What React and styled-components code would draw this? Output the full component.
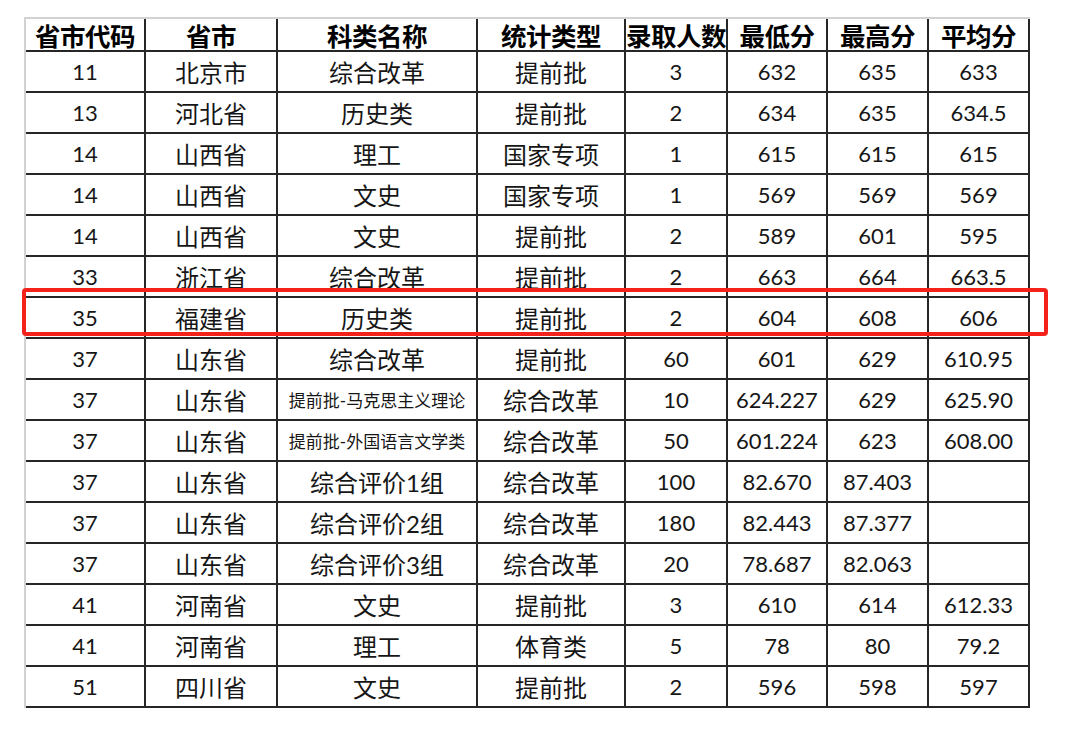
import styled, { createGlobalStyle } from "styled-components";

const columns = ["省市代码", "省市", "科类名称", "统计类型", "录取人数", "最低分", "最高分", "平均分"];

const rows = [
    ["11", "北京市", "综合改革", "提前批", "3", "632", "635", "633"],
    ["13", "河北省", "历史类", "提前批", "2", "634", "635", "634.5"],
    ["14", "山西省", "理工", "国家专项", "1", "615", "615", "615"],
    ["14", "山西省", "文史", "国家专项", "1", "569", "569", "569"],
    ["14", "山西省", "文史", "提前批", "2", "589", "601", "595"],
    ["33", "浙江省", "综合改革", "提前批", "2", "663", "664", "663.5"],
    ["35", "福建省", "历史类", "提前批", "2", "604", "608", "606"],
    ["37", "山东省", "综合改革", "提前批", "60", "601", "629", "610.95"],
    ["37", "山东省", "提前批-马克思主义理论", "综合改革", "10", "624.227", "629", "625.90"],
    ["37", "山东省", "提前批-外国语言文学类", "综合改革", "50", "601.224", "623", "608.00"],
    ["37", "山东省", "综合评价1组", "综合改革", "100", "82.670", "87.403", ""],
    ["37", "山东省", "综合评价2组", "综合改革", "180", "82.443", "87.377", ""],
    ["37", "山东省", "综合评价3组", "综合改革", "20", "78.687", "82.063", ""],
    ["41", "河南省", "文史", "提前批", "3", "610", "614", "612.33"],
    ["41", "河南省", "理工", "体育类", "5", "78", "80", "79.2"],
    ["51", "四川省", "文史", "提前批", "2", "596", "598", "597"],
];

const HIGHLIGHT_ROW = 6;

function sizeOf(value) {
    if (value.length > 8) return "small";
    if (/^[\d.]*$/.test(value)) return "number";
    return "text";
}

export default function App() {
    return (
        <>
            <GlobalStyle />
            <Page>
                <TableWrap>
                    <Grid>
                        {columns.map(c => (
                            <HeadCell key={c}>{c}</HeadCell>
                        ))}
                        {rows.map((row, i) =>
                            row.map((value, j) => (
                                <Cell key={i + "-" + j} $kind={sizeOf(value)}>
                                    {value}
                                </Cell>
                            ))
                        )}
                    </Grid>
                    <Highlight style={{ top: 33 + HIGHLIGHT_ROW * 41 - 8 }} />
                </TableWrap>
            </Page>
        </>
    );
}

const GlobalStyle = createGlobalStyle`
    html, body {
        margin: 0;
        background: #ffffff;
    }
    body {
        font-family: Lato, "Noto Sans CJK SC", sans-serif;
    }
`;

const Page = styled.div`
    padding: 17px 0 0 24px;
    height: 744px;
    box-sizing: border-box;
`;

const TableWrap = styled.div`
    position: relative;
    width: 1006px;
`;

const Grid = styled.div`
    display: grid;
    grid-template-columns: 120px 132px 200px 148px 102px 100px 101px 101px;
    grid-template-rows: 33px;
    grid-auto-rows: 41px;
    border-top: 2px solid #d2d2d2;
    border-left: 2px solid #d2d2d2;
`;

const fontSizes = { small: "17px", number: "22px", text: "24px" };

const Cell = styled.div`
    box-sizing: border-box;
    display: flex;
    align-items: center;
    justify-content: center;
    border-right: 2px solid #262626;
    border-bottom: 2px solid #262626;
    font-size: ${p => fontSizes[p.$kind]};
    color: #161616;
    white-space: nowrap;
`;

const HeadCell = styled(Cell)`
    font-size: 25.5px;
    font-weight: 700;
    color: #000;
    letter-spacing: -0.5px;
`;

const Highlight = styled.div`
    position: absolute;
    left: -2px;
    width: 1026px;
    height: 48px;
    box-sizing: border-box;
    border: 4px solid #f3231b;
    border-radius: 4px;
    pointer-events: none;
`;
